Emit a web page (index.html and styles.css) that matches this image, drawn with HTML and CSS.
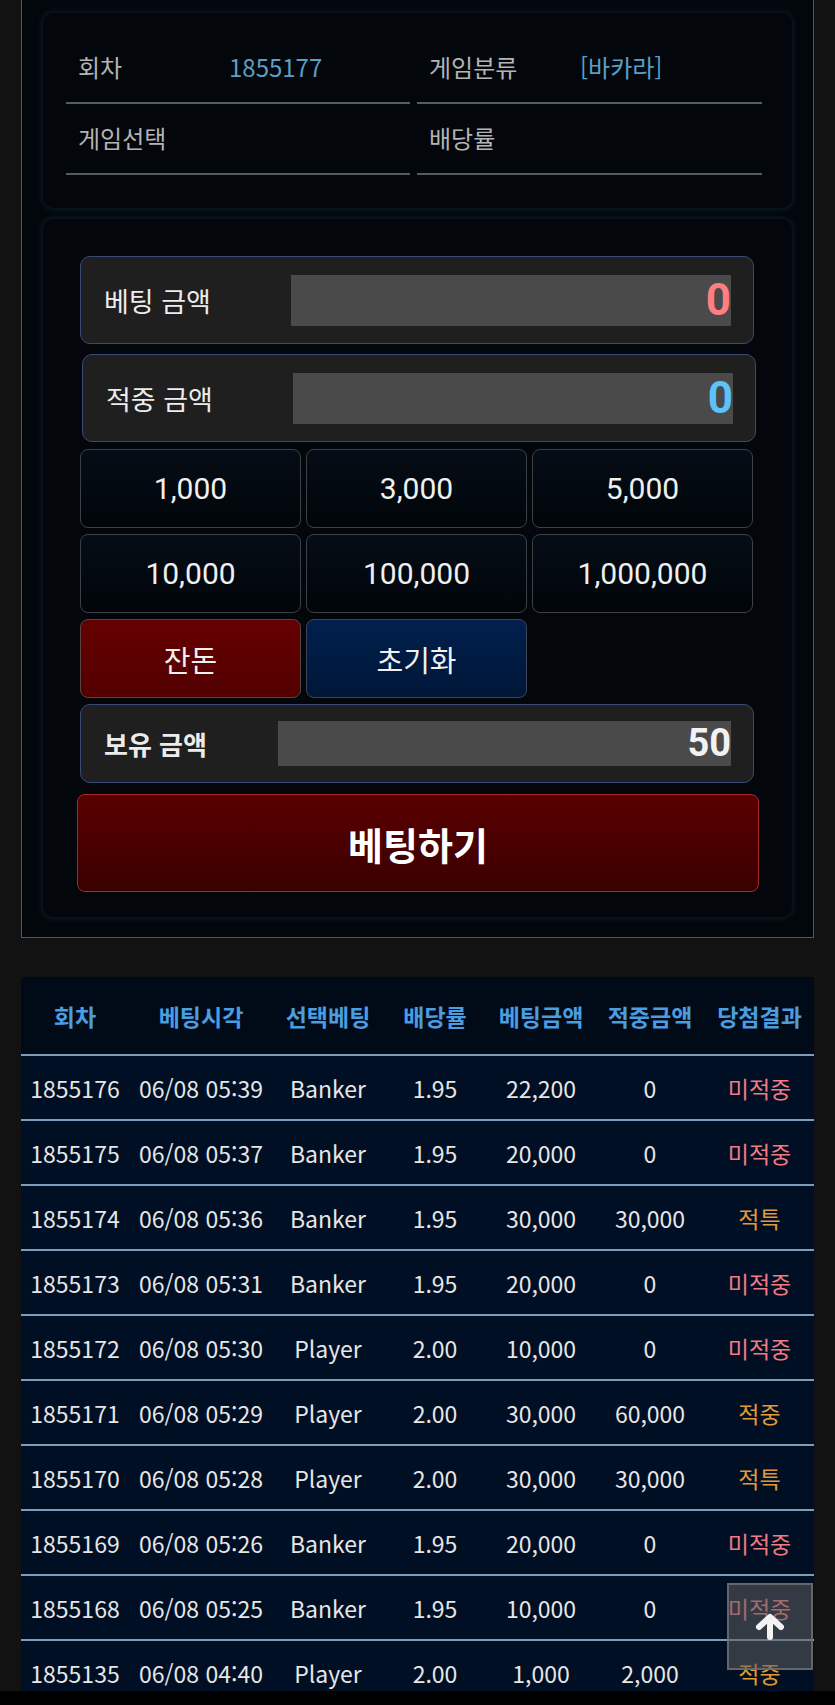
FILE: index.html
```html
<!DOCTYPE html>
<html lang="ko">
<head>
<meta charset="utf-8">
<title>베팅</title>
<link rel="stylesheet" href="styles.css">
</head>
<body>
<div class="frame">
  <section class="card info-card">
    <div class="info-cell"><span class="info-label">회차</span><span class="info-value">1855177</span></div>
    <div class="info-cell"><span class="info-label">게임분류</span><span class="info-value">[바카라]</span></div>
    <div class="info-cell"><span class="info-label">게임선택</span><span class="info-value"></span></div>
    <div class="info-cell"><span class="info-label">배당률</span><span class="info-value"></span></div>
  </section>

  <section class="card bet-card">
    <div class="amount-box">
      <span class="amount-label">베팅 금액</span>
      <div class="amount-input red">0</div>
    </div>
    <div class="amount-box shifted">
      <span class="amount-label">적중 금액</span>
      <div class="amount-input blue">0</div>
    </div>
    <div class="chip-grid">
      <button class="chip">1,000</button>
      <button class="chip">3,000</button>
      <button class="chip">5,000</button>
      <button class="chip">10,000</button>
      <button class="chip">100,000</button>
      <button class="chip">1,000,000</button>
      <button class="chip chip-red">잔돈</button>
      <button class="chip chip-blue">초기화</button>
    </div>
    <div class="amount-box hold">
      <span class="amount-label bold">보유 금액</span>
      <div class="amount-input white">50</div>
    </div>
    <button class="bet-btn">베팅하기</button>
  </section>
</div>

<table class="history">
  <colgroup>
    <col class="c1"><col class="c2"><col class="c3"><col class="c4"><col class="c5"><col class="c6"><col class="c7">
  </colgroup>
  <thead>
    <tr><th>회차</th><th>베팅시각</th><th>선택베팅</th><th>배당률</th><th>베팅금액</th><th>적중금액</th><th>당첨결과</th></tr>
  </thead>
  <tbody>
    <tr><td>1855176</td><td>06/08 05:39</td><td>Banker</td><td>1.95</td><td>22,200</td><td>0</td><td class="lose">미적중</td></tr>
    <tr><td>1855175</td><td>06/08 05:37</td><td>Banker</td><td>1.95</td><td>20,000</td><td>0</td><td class="lose">미적중</td></tr>
    <tr><td>1855174</td><td>06/08 05:36</td><td>Banker</td><td>1.95</td><td>30,000</td><td>30,000</td><td class="win">적특</td></tr>
    <tr><td>1855173</td><td>06/08 05:31</td><td>Banker</td><td>1.95</td><td>20,000</td><td>0</td><td class="lose">미적중</td></tr>
    <tr><td>1855172</td><td>06/08 05:30</td><td>Player</td><td>2.00</td><td>10,000</td><td>0</td><td class="lose">미적중</td></tr>
    <tr><td>1855171</td><td>06/08 05:29</td><td>Player</td><td>2.00</td><td>30,000</td><td>60,000</td><td class="win">적중</td></tr>
    <tr><td>1855170</td><td>06/08 05:28</td><td>Player</td><td>2.00</td><td>30,000</td><td>30,000</td><td class="win">적특</td></tr>
    <tr><td>1855169</td><td>06/08 05:26</td><td>Banker</td><td>1.95</td><td>20,000</td><td>0</td><td class="lose">미적중</td></tr>
    <tr><td>1855168</td><td>06/08 05:25</td><td>Banker</td><td>1.95</td><td>10,000</td><td>0</td><td class="lose">미적중</td></tr>
    <tr><td>1855135</td><td>06/08 04:40</td><td>Player</td><td>2.00</td><td>1,000</td><td>2,000</td><td class="win">적중</td></tr>
  </tbody>
</table>

<a class="to-top" href="#" aria-label="맨 위로">
  <svg width="30" height="27" viewBox="0 0 30 27" aria-hidden="true">
    <path d="M15 24 V5 M4 14 L15 4 L26 14" fill="none" stroke="#f2f2f2" stroke-width="6" stroke-linecap="round" stroke-linejoin="round"/>
  </svg>
</a>
<div class="bottom-bar"></div>
</body>
</html>
```

FILE: styles.css
```css
* { box-sizing: border-box; }

html, body {
  margin: 0;
  padding: 0;
}

body {
  background: #121212;
  font-family: "Noto Sans CJK KR", "Noto Sans", sans-serif;
  color: #e8e8e8;
}

.frame {
  margin: 0 21px;
  background: #02070c;
  border-left: 1px solid #4a5a69;
  border-right: 1px solid #4a5a69;
  border-bottom: 1px solid #4a5a69;
  padding: 13px 21px 20px 21px;
  display: flex;
  flex-direction: column;
  gap: 11px;
}

.card {
  background: #03070b;
  border-radius: 10px;
  box-shadow: 0 0 6px 1px rgba(70, 110, 150, 0.22);
}

/* info card */
.info-card {
  display: grid;
  grid-template-columns: 344px 345px;
  column-gap: 7px;
  padding: 20px 29px 33px 23px;
}

.info-cell {
  height: 71px;
  border-bottom: 2px solid #525c66;
  display: flex;
  align-items: center;
  padding-left: 12px;
  padding-bottom: 2px;
  font-size: 24px;
}

.info-label {
  width: 151px;
  flex: none;
  color: #b4b4b4;
}

.info-value {
  color: #5b9fc6;
}

/* bet card */
.bet-card {
  padding: 37px 38px 25px 37px;
  display: flex;
  flex-direction: column;
}

.amount-box {
  height: 88px;
  background: #1f1f1f;
  border: 1.5px solid #3a4a77;
  border-radius: 10px;
  display: flex;
  align-items: center;
  padding: 0 22px 0 23px;
}

.amount-box.shifted {
  margin: 10px -2px 0 2px;
}

.amount-label {
  width: 187px;
  flex: none;
  font-size: 27px;
  color: #ececec;
}

.amount-label.bold {
  font-weight: 700;
  font-size: 26px;
  width: 174px;
}

.amount-input {
  flex: 1;
  height: 51px;
  background: #4a4a4a;
  font-family: Roboto, "Noto Sans", sans-serif;
  font-weight: 700;
  font-size: 44px;
  line-height: 51px;
  text-align: right;
  overflow: hidden;
}

.amount-input.red { color: #ff7f80; }
.amount-input.blue { color: #5cc2fa; }
.amount-input.white { color: #f2f2f2; font-size: 38px; }

.chip-grid {
  margin-top: 7px;
  display: grid;
  grid-template-columns: repeat(3, 221px);
  column-gap: 5px;
  row-gap: 6px;
}

.chip {
  height: 79px;
  border: 1.5px solid #3c4146;
  border-radius: 8px;
  background: linear-gradient(#050d16, #01050a);
  color: #f0f0f0;
  font-family: Roboto, "Noto Sans CJK KR", sans-serif;
  font-size: 30px;
  padding: 0;
}

.chip-red {
  background: linear-gradient(#660000, #520000);
  border-color: #574545;
  font-family: "Noto Sans CJK KR", sans-serif;
  font-size: 29px;
}

.chip-blue {
  background: linear-gradient(#00204e, #001737);
  border-color: #3a4656;
  font-family: "Noto Sans CJK KR", sans-serif;
  font-size: 29px;
}

.amount-box.hold {
  margin-top: 6px;
  height: 79px;
  padding: 0 22px 0 23px;
}

.amount-box.hold .amount-input {
  height: 45px;
  line-height: 45px;
}

.bet-btn {
  margin: 11px -5px 0 -3px;
  height: 98px;
  border: 1.5px solid #a8282c;
  border-radius: 8px;
  background: linear-gradient(#5a0000, #3a0000);
  color: #ffffff;
  font-family: "Noto Sans CJK KR", sans-serif;
  font-weight: 700;
  font-size: 38px;
  padding: 0;
}

/* history table */
.history {
  margin: 39px 21px 0 21px;
  width: 793px;
  border-collapse: collapse;
  table-layout: fixed;
  font-size: 23px;
}

.c1 { width: 108px; }
.c2 { width: 144px; }
.c3 { width: 110px; }
.c4 { width: 104px; }
.c5 { width: 108px; }
.c6 { width: 110px; }
.c7 { width: 109px; }

.history th {
  height: 78px;
  background: #010b17;
  color: #4a9de0;
  font-weight: 700;
  text-align: center;
  border-bottom: 2px solid #7e9dba;
  padding: 0;
  white-space: nowrap;
}

.history td {
  height: 65px;
  background: #000f24;
  color: #e6e6e6;
  text-align: center;
  border-bottom: 2px solid #7e9dba;
  padding: 0;
  white-space: nowrap;
}

.history td.lose { color: #f27a80; }
.history td.win { color: #e39a36; }

/* overlay controls */
.to-top {
  position: fixed;
  right: 22px;
  bottom: 35px;
  width: 86px;
  height: 87px;
  background: rgba(95, 95, 95, 0.55);
  border: 2px solid rgba(110, 110, 110, 0.85);
  display: flex;
  align-items: center;
  justify-content: center;
}

.bottom-bar {
  position: fixed;
  left: 0;
  right: 0;
  bottom: 0;
  height: 14px;
  background: #000;
}
```
